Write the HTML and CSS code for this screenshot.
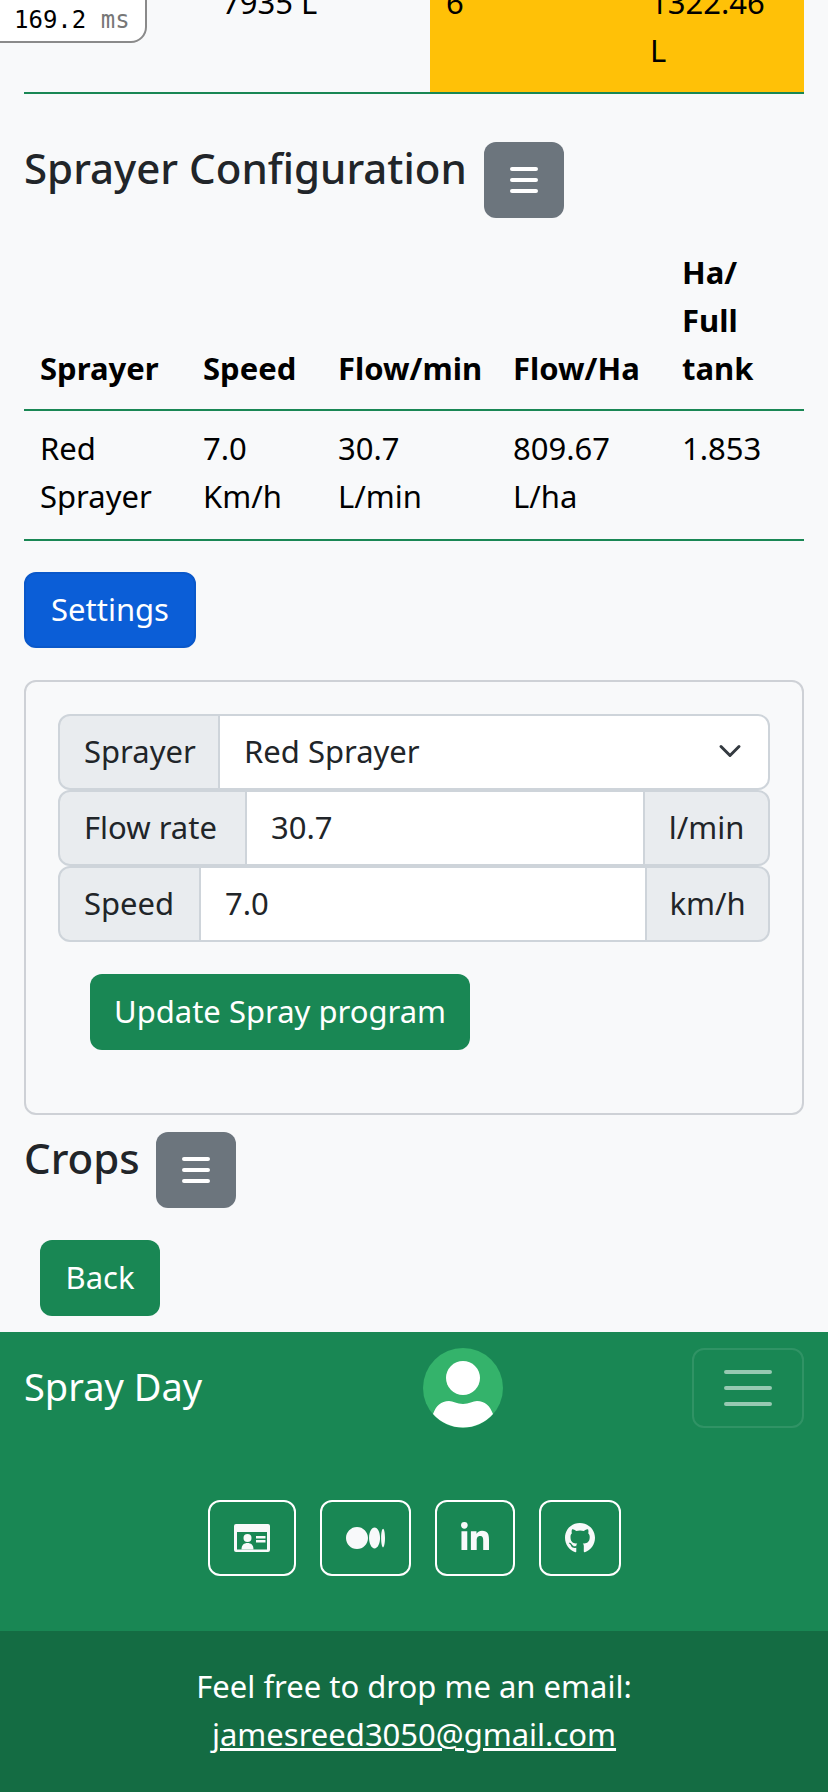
FILE: index.html
```html
<!DOCTYPE html>
<html lang="en">
<head>
    <meta charset="UTF-8">
    <meta name="viewport" content="width=device-width, initial-scale=1.0">
    <title>Spray Day</title>
    <link rel="stylesheet" href="styles.css">
</head>
<body>
    <div class="timer">169.2 <span class="timerUnit">ms</span></div>

    <main class="content">
        <table class="table tableProgram">
            <tr>
                <td class="colBlank"></td>
                <td class="colTotal">7935 L</td>
                <td class="colCount warn">6</td>
                <td class="colTank warn">1322.46<br>L</td>
            </tr>
        </table>

        <div class="sectionHead headSprayer">
            <h4>Sprayer Configuration</h4>
            <button class="btn btnGrey" type="button">
                <svg class="barsIcon" viewBox="0 0 28 26"><path d="M2 2h24M2 13h24M2 24h24"/></svg>
            </button>
        </div>

        <table class="table tableSprayer">
            <thead>
                <tr>
                    <th class="colSprayer">Sprayer</th>
                    <th class="colSpeed">Speed</th>
                    <th class="colFlow">Flow/min</th>
                    <th class="colHa">Flow/Ha</th>
                    <th>Ha/ Full tank</th>
                </tr>
            </thead>
            <tbody>
                <tr>
                    <td>Red Sprayer</td>
                    <td>7.0 Km/h</td>
                    <td>30.7 L/min</td>
                    <td>809.67 L/ha</td>
                    <td>1.853</td>
                </tr>
            </tbody>
        </table>

        <button class="btn btnBlue btnSettings" type="button">Settings</button>

        <form class="card">
            <div class="inputGroup">
                <label class="addon addonSprayer">Sprayer</label>
                <div class="field fieldSelect">Red Sprayer
                    <svg class="chevron" viewBox="0 0 16 16"><path d="m2 5 6 6 6-6"/></svg>
                </div>
            </div>
            <div class="inputGroup">
                <label class="addon addonFlow">Flow rate</label>
                <div class="field">30.7</div>
                <span class="addon addonEnd addonLmin">l/min</span>
            </div>
            <div class="inputGroup">
                <label class="addon addonSpeed">Speed</label>
                <div class="field">7.0</div>
                <span class="addon addonEnd addonKmh">km/h</span>
            </div>
            <button class="btn btnGreen btnUpdate" type="button">Update Spray program</button>
        </form>

        <div class="sectionHead headCrops">
            <h4>Crops</h4>
            <button class="btn btnGrey" type="button">
                <svg class="barsIcon" viewBox="0 0 28 26"><path d="M2 2h24M2 13h24M2 24h24"/></svg>
            </button>
        </div>

        <button class="btn btnGreen btnBack" type="button">Back</button>
    </main>

    <footer class="footer">
        <nav class="navbar">
            <a class="brand" href="#">Spray Day</a>
            <svg class="avatar" viewBox="0 0 80 80">
                <circle cx="40" cy="40" r="40" fill="#34b36b"/>
                <circle cx="40" cy="30" r="17" fill="#fff"/>
                <path d="M10 66C13 58 18 53 26 53C30 53 34 56 40 56C46 56 50 53 54 53C62 53 67 58 70 66A40 40 0 0 1 10 66Z" fill="#fff"/>
            </svg>
            <button class="toggler" type="button">
                <svg class="togglerIcon" viewBox="0 0 48 36"><path d="M2 2h44M2 18h44M2 34h44"/></svg>
            </button>
        </nav>

        <div class="socials">
            <a class="social" href="#">
                <svg class="iconCard" viewBox="0 0 36 28">
                    <path fill-rule="evenodd" d="M2 0h32a2 2 0 0 1 2 2v24a2 2 0 0 1-2 2H2a2 2 0 0 1-2-2V2a2 2 0 0 1 2-2ZM3 8v17.5h30V8Z"/>
                    <circle cx="13.5" cy="14" r="4"/>
                    <path d="M7.5 25.5C7.5 21 10 19 13.5 19S19.5 21 19.5 25.5Z"/>
                    <path d="M22 12h9.5v2.5H22ZM22 16h9.5v2.5H22Z"/>
                </svg>
            </a>
            <a class="social" href="#">
                <svg class="iconMedium" viewBox="0 0 640 512">
                    <path d="M180.5,74.262C80.813,74.262,0,155.633,0,256S80.819,437.738,180.5,437.738,361,356.373,361,256,280.191,74.262,180.5,74.262Zm288.25,10.646c-49.845,0-90.245,76.619-90.245,171.095s40.406,171.1,90.251,171.1,90.251-76.619,90.251-171.1H559C559,161.5,518.6,84.908,468.752,84.908Zm139.506,17.821c-17.526,0-31.735,68.628-31.735,153.274s14.2,153.274,31.735,153.274S640,340.631,640,256C640,171.351,625.785,102.729,608.258,102.729Z"/>
                </svg>
            </a>
            <a class="social" href="#">
                <svg class="iconLinkedin" viewBox="0 0 448 512">
                    <path d="M100.28 448H7.4V148.9h92.88zM53.79 108.1C24.09 108.1 0 83.5 0 53.8a53.79 53.79 0 0 1 107.58 0c0 29.7-24.1 54.3-53.79 54.3zM447.9 448h-92.68V302.4c0-34.7-.7-79.2-48.29-79.2-48.29 0-55.69 37.7-55.69 76.7V448h-92.78V148.9h89.08v40.8h1.3c12.4-23.5 42.69-48.3 87.88-48.3 94 0 111.28 61.9 111.28 142.3V448z"/>
                </svg>
            </a>
            <a class="social" href="#">
                <svg class="iconGithub" viewBox="0 0 496 512">
                    <path d="M165.9 397.4c0 2-2.3 3.6-5.2 3.6-3.3 0-5.6-1.6-5.6-3.6 0-2 2.3-3.6 5.2-3.6 3-.3 5.6 1.3 5.6 3.6zm-31.1-4.5c-.7 2 1.3 4.3 4.3 4.9 2.6 1 5.6 0 6.2-2s-1.3-4.3-4.3-5c-2.6-.7-5.5.3-6.2 2.1zm44.2-1.7c-2.9.7-4.9 2.6-4.6 4.9.3 2 2.9 3.3 5.9 2.6 2.9-.7 4.9-2.6 4.6-4.6-.3-1.9-3-3.2-5.9-2.9zM244.8 8C106.1 8 0 113.3 0 252c0 110.9 69.8 205.8 169.5 239.2 12.8 2.3 17.3-5.6 17.3-12.1 0-6.2-.3-40.4-.3-61.4 0 0-70 15-84.7-29.8 0 0-11.4-29.1-27.8-36.6 0 0-22.9-15.7 1.6-15.4 0 0 24.9 2 38.6 25.8 21.9 38.6 58.6 27.5 72.9 20.9 2.3-16 8.8-27.1 16-33.7-55.9-6.2-112.3-14.3-112.3-110.5 0-27.5 7.6-41.3 23.6-58.9-2.6-6.5-11.1-33.3 2.6-67.9 20.9-6.5 69 27 69 27 20-5.6 41.5-8.5 62.8-8.5s42.8 2.9 62.8 8.5c0 0 48.1-33.6 69-27 13.7 34.7 5.2 61.4 2.6 67.9 16 17.7 25.8 31.5 25.8 58.9 0 96.5-58.9 104.2-114.8 110.5 9.2 7.9 17 22.9 17 46.4 0 33.7-.3 75.4-.3 83.6 0 6.5 4.6 14.4 17.3 12.1C428.2 457.8 496 362.9 496 252 496 113.3 383.5 8 244.8 8z"/>
                </svg>
            </a>
        </div>

        <div class="contact">
            Feel free to drop me an email:<br>
            <a class="contactLink" href="#">jamesreed3050@gmail.com</a>
        </div>
    </footer>
</body>
</html>
```

FILE: styles.css
```css
body{
    margin: 0;
    background-color: #f8f9fa;
    color: #212529;
    font-family: "Noto Sans", "Open Sans", sans-serif;
    font-size: 31px;
    line-height: 48px;
    overflow-x: hidden;
}

/* timer pinned on the corner of the viewport */
.timer{
    position: fixed;
    top: -2px;
    left: -2px;
    z-index: 10;
    width: 131px;
    height: 41px;
    padding-left: 14px;
    background-color: white;
    border: 2px solid #8a8a8a;
    border-bottom-right-radius: 16px;
    color: black;
    font-family: "DejaVu Sans Mono", monospace;
    font-size: 24px;
    line-height: 41px;
    white-space: pre;
}
.timerUnit{
    color: #777;
}

.content{
    padding: 0 24px 16px;
}

.table{
    width: 780px;
    border-collapse: collapse;
    table-layout: fixed;
}
.table th, .table td{
    padding: 16px;
    border-bottom: 2px solid #198754;
    text-align: left;
    vertical-align: top;
}
.table th{
    padding-top: 15px;
    padding-bottom: 17px;
    color: black;
    vertical-align: bottom;
    font-weight: 700;
}
.table td{
    color: black;
}
.tableProgram{
    margin-top: -38px;
}
.tableProgram td{
    padding-bottom: 18px;
}
.tableSprayer td{
    padding-top: 13px;
    padding-bottom: 19px;
}
.colBlank{ width: 150px; }
.colTotal{ width: 192px; }
.colCount{ width: 172px; }
.warn{
    background-color: #ffc107;
}

.sectionHead{
    display: flex;
    align-items: flex-start;
}
.sectionHead h4{
    margin: 0 17px 0 0;
    font-size: 42px;
    font-weight: 500;
    line-height: 52px;
}
.headSprayer{
    margin-top: 48px;
    margin-bottom: 15px;
}
.headCrops{
    margin-top: 17px;
}
.headCrops h4{
    margin-right: 16px;
}

.colSprayer{ width: 131px; }
.colSpeed{ width: 103px; }
.colFlow{ width: 143px; }
.colHa{ width: 137px; }

.btn{
    display: inline-flex;
    align-items: center;
    justify-content: center;
    box-sizing: border-box;
    height: 76px;
    padding: 0 24px 3px;
    border: 2px solid transparent;
    border-radius: 12px;
    color: white;
    font-family: inherit;
    font-size: 31px;
    line-height: 48px;
    white-space: nowrap;
}
.btnGrey{
    width: 80px;
    padding: 0;
    background-color: #6c757d;
}
.btnBlue{
    background-color: #0b5ed7;
    border-color: #0a58ca;
}
.btnGreen{
    background-color: #198754;
}
.barsIcon{
    width: 28px;
    height: 26px;
    fill: none;
    stroke: white;
    stroke-width: 4;
    stroke-linecap: round;
}

.btnSettings{
    display: flex;
    width: 172px;
    margin-top: 31px;
}

.card{
    margin-top: 32px;
    padding: 32px;
    border: 2px solid #ced1d6;
    border-radius: 12px;
}
.inputGroup{
    display: flex;
    height: 76px;
}
.addon{
    display: flex;
    align-items: center;
    flex: none;
    box-sizing: border-box;
    height: 76px;
    padding: 0 24px 3px;
    background-color: #e9ecef;
    border: 2px solid #ced4da;
    border-radius: 12px 0 0 12px;
    white-space: nowrap;
}
.addonEnd{
    border-radius: 0 12px 12px 0;
    margin-left: -2px;
    justify-content: center;
    padding: 0 0 3px;
}
.addonSprayer{ width: 162px; }
.addonFlow{ width: 189px; }
.addonSpeed{ width: 143px; }
.addonLmin{ width: 127px; }
.addonKmh{ width: 125px; }
.field{
    display: flex;
    align-items: center;
    flex: 1;
    box-sizing: border-box;
    height: 76px;
    margin-left: -2px;
    padding: 0 24px 3px;
    background-color: white;
    border: 2px solid #ced4da;
}
.fieldSelect{
    justify-content: space-between;
    padding-right: 32px;
    border-radius: 0 12px 12px 0;
}
.chevron{
    width: 24px;
    height: 24px;
    margin-right: -6px;
    fill: none;
    stroke: #343a40;
    stroke-width: 2;
    stroke-linecap: round;
    stroke-linejoin: round;
}
.btnUpdate{
    display: flex;
    width: 380px;
    margin: 32px 0 31px 32px;
}

.btnBack{
    display: flex;
    width: 120px;
    margin: 32px 0 0 16px;
}

.footer{
    background-color: #198754;
    color: white;
}
.navbar{
    display: flex;
    align-items: center;
    justify-content: space-between;
    padding: 16px 24px;
}
.brand{
    margin-right: 32px;
    margin-bottom: 4px;
    color: white;
    font-size: 38px;
    line-height: 60px;
    text-decoration: none;
}
.avatar{
    width: 80px;
    height: 80px;
}
.toggler{
    display: flex;
    align-items: center;
    justify-content: center;
    width: 112px;
    height: 80px;
    padding: 0;
    background: none;
    border: 2px solid rgba(255,255,255,.1);
    border-radius: 12px;
}
.togglerIcon{
    width: 48px;
    height: 36px;
    fill: none;
    stroke: rgba(255,255,255,.55);
    stroke-width: 4;
    stroke-linecap: round;
}

.socials{
    display: flex;
    justify-content: center;
    gap: 24px;
    padding: 56px 0 55px;
}
.social{
    display: flex;
    align-items: center;
    height: 72px;
    padding: 0 24px;
    border: 2px solid white;
    border-radius: 12px;
}
.social svg{
    display: block;
    fill: #f8f9fa;
}
.iconCard{ width: 36px; height: 28px; }
.iconMedium{ width: 39px; height: 32px; }
.iconLinkedin{ width: 28px; height: 32px; }
.iconGithub{ width: 30px; height: 32px; }

.contact{
    padding: 31px 16px 34px;
    background-color: #146c43;
    text-align: center;
}
.contactLink{
    color: white;
}
```
